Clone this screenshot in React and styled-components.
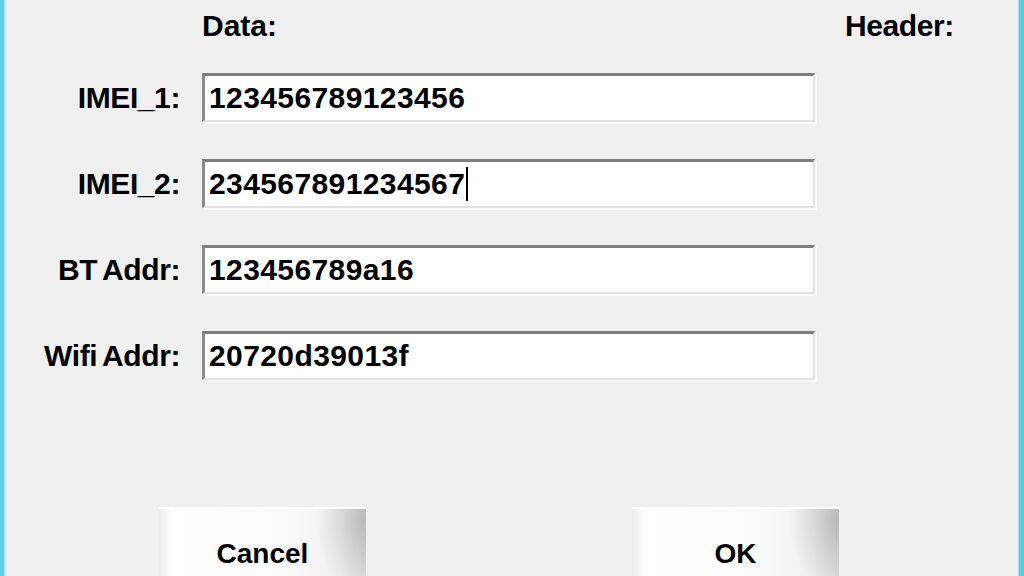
import styled, { createGlobalStyle } from 'styled-components';

const GlobalStyle = createGlobalStyle`
  html,
  body {
    margin: 0;
    padding: 0;
    height: 100%;
    overflow: hidden;
  }

  #root {
    height: 100%;
  }
`;

const Dialog = styled.div`
  box-sizing: border-box;
  height: 100vh;
  background: #f0f0f0;
  border-left: 4px solid #5fd2e8;
  border-right: 5px solid #5ccbe1;
  box-shadow:
    inset 1px 0 0 #9ae6f4,
    inset -1px 0 0 #a4e8f5;
  display: flex;
  flex-direction: column;
  overflow: hidden;
  font-family: 'Liberation Sans', Arial, sans-serif;
  font-weight: 700;
  color: #000;
`;

const FormGrid = styled.div`
  display: grid;
  grid-template-columns: 176px 613px 1fr;
  column-gap: 22px;
  align-items: center;
`;

const HeaderRow = styled(FormGrid)`
  padding-top: 9px;
  font-size: 30px;
  line-height: 34px;
`;

const ColumnTitle = styled.div`
  grid-column: ${(props) => props.$column};
  padding-left: ${(props) => (props.$column === 3 ? '8px' : '0')};
  letter-spacing: ${(props) => (props.$column === 3 ? '-0.4px' : '0')};
`;

const Fields = styled.div`
  margin-top: 30px;
  display: flex;
  flex-direction: column;
  gap: 37px;
`;

const Label = styled.label`
  text-align: right;
  font-size: 30px;
  line-height: 34px;
  letter-spacing: -0.4px;
  word-spacing: -2px;
  white-space: nowrap;
`;

const TextBox = styled.div`
  box-sizing: border-box;
  height: 49px;
  background: #ffffff;
  border-top: 3px solid #7e7e7e;
  border-left: 3px solid #8a8a8a;
  border-right: 2px solid #e2e2e2;
  border-bottom: 2px solid #e2e2e2;
  box-shadow: 2px 2px 0 #fafafa;
  padding: 0 4px;
  display: flex;
  align-items: center;
  font-size: 30px;
  line-height: 34px;
  letter-spacing: 0.4px;
`;

const Caret = styled.span`
  display: inline-block;
  width: 2px;
  height: 34px;
  margin-left: 1px;
  background: #000;
`;

const ButtonRow = styled.div`
  margin-top: 127px;
  padding-left: 155px;
  display: flex;
  gap: 266px;
`;

const DialogButton = styled.button`
  box-sizing: border-box;
  width: 207px;
  height: 100px;
  flex-shrink: 0;
  border: none;
  padding: 30px 0 0;
  display: flex;
  justify-content: center;
  align-items: flex-start;
  background:
    radial-gradient(
      ellipse 50px 80px at 100% 12%,
      rgba(0, 0, 0, 0.19),
      rgba(0, 0, 0, 0) 100%
    ),
    linear-gradient(
      90deg,
      #ececec 0%,
      #ffffff 7%,
      #fbfbfb 60%,
      #f0f0f0 88%,
      #e2e2e2 100%
    );
  box-shadow: inset 0 2px 0 #fdfdfd;
  font-family: 'Liberation Sans', Arial, sans-serif;
  font-weight: 700;
  font-size: 28px;
  line-height: 34px;
  color: #000;
  cursor: pointer;
`;

const fields = [
  { id: 'imei1', label: 'IMEI_1:', value: '123456789123456' },
  { id: 'imei2', label: 'IMEI_2:', value: '234567891234567', focused: true },
  { id: 'bt', label: 'BT Addr:', value: '123456789a16' },
  { id: 'wifi', label: 'Wifi Addr:', value: '20720d39013f' },
];

export default function App() {
  return (
    <>
      <GlobalStyle />
      <Dialog>
        <HeaderRow>
          <ColumnTitle $column={2}>Data:</ColumnTitle>
          <ColumnTitle $column={3}>Header:</ColumnTitle>
        </HeaderRow>

        <Fields>
          {fields.map((field) => (
            <FormGrid key={field.id}>
              <Label htmlFor={field.id}>{field.label}</Label>
              <TextBox id={field.id} role='textbox'>
                {field.value}
                {field.focused && <Caret />}
              </TextBox>
            </FormGrid>
          ))}
        </Fields>

        <ButtonRow>
          <DialogButton type='button'>Cancel</DialogButton>
          <DialogButton type='button'>OK</DialogButton>
        </ButtonRow>
      </Dialog>
    </>
  );
}
